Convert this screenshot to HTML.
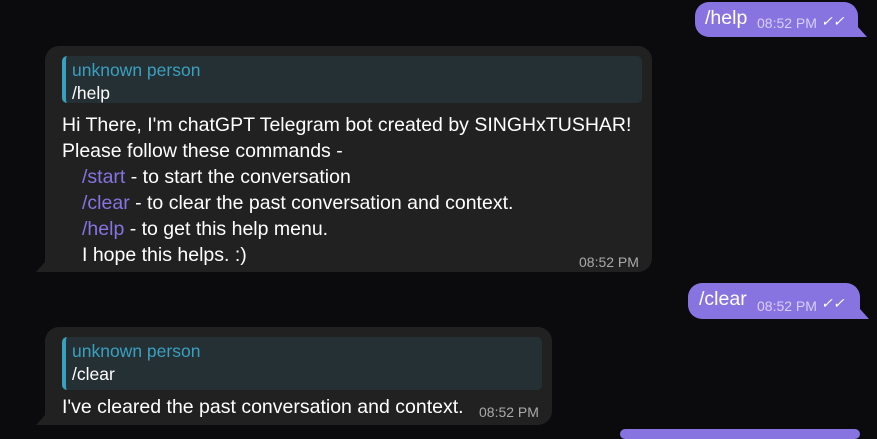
<!DOCTYPE html>
<html><head><style>
body{margin:0;width:877px;height:432px;background:#0b0a0d;font-family:"Liberation Sans",sans-serif;overflow:hidden;position:relative}
.b{position:absolute;box-sizing:border-box}
.in{background:#212121;border-radius:14px 14px 14px 0;color:#fff;font-size:19.5px}
.out{background:#8774e1;border-radius:14px 14px 0 14px;color:#fff;font-size:19.5px}
.rp{position:absolute;background:#253034;border-radius:5px;border-left:4px solid #3aa0c0;box-sizing:border-box;padding:3px 0 0 6px;font-size:17.5px;line-height:23px}
.rp .n{color:#3aa0c0}
.t{position:absolute;font-size:14px;color:#aaa}
.c{color:#8774e1}
.l{position:absolute;left:17px;white-space:nowrap}
.tail1{position:absolute;left:-9px;bottom:0;width:0;height:0;border-bottom:10px solid #212121;border-left:9px solid transparent}
.tail2{position:absolute;right:-9px;bottom:0;width:0;height:0;border-bottom:10px solid #8774e1;border-right:9px solid transparent}
</style></head><body>
<div class="b out" style="left:695px;top:2px;width:163px;height:35px"><span class="l" style="left:10px;top:5px">/help</span><span class="t" style="left:62px;top:13px;color:#d8d0fa">08:52 PM</span><span style="position:absolute;left:126px;top:11px;color:#fff;font-size:14px;font-style:italic">✓✓</span><div class="tail2"></div></div>

<div class="b in" style="left:45px;top:46px;width:607px;height:226px"><div class="tail1"></div>
<div class="rp" style="left:17px;top:10px;width:580px;height:47px"><div class="n">unknown person</div><div>/help</div></div>
<div class="l" style="top:68px">Hi There, I'm chatGPT Telegram bot created by SINGHxTUSHAR!</div>
<div class="l" style="top:94px">Please follow these commands -</div>
<div class="l" style="top:120px;left:37px"><span class="c">/start</span> - to start the conversation</div>
<div class="l" style="top:146px;left:37px"><span class="c">/clear</span> - to clear the past conversation and context.</div>
<div class="l" style="top:172px;left:37px"><span class="c">/help</span> - to get this help menu.</div>
<div class="l" style="top:198px;left:37px">I hope this helps. :)</div>
<span class="t" style="left:534px;top:208px">08:52 PM</span>
</div>

<div class="b out" style="left:688px;top:283px;width:172px;height:36px"><span class="l" style="left:11px;top:5px">/clear</span><span class="t" style="left:69px;top:15px;color:#d8d0fa">08:52 PM</span><span style="position:absolute;left:133px;top:12px;color:#fff;font-size:14px;font-style:italic">✓✓</span><div class="tail2"></div></div>

<div class="b in" style="left:45px;top:327px;width:507px;height:98px"><div class="tail1"></div>
<div class="rp" style="left:17px;top:10px;width:480px;height:53px"><div class="n">unknown person</div><div>/clear</div></div>
<div class="l" style="top:69px">I've cleared the past conversation and context.</div>
<span class="t" style="left:434px;top:77px">08:52 PM</span>
</div>
<div class="b" style="left:620px;top:429px;width:240px;height:10px;background:#8774e1;border-radius:8px"></div>
</body></html>
